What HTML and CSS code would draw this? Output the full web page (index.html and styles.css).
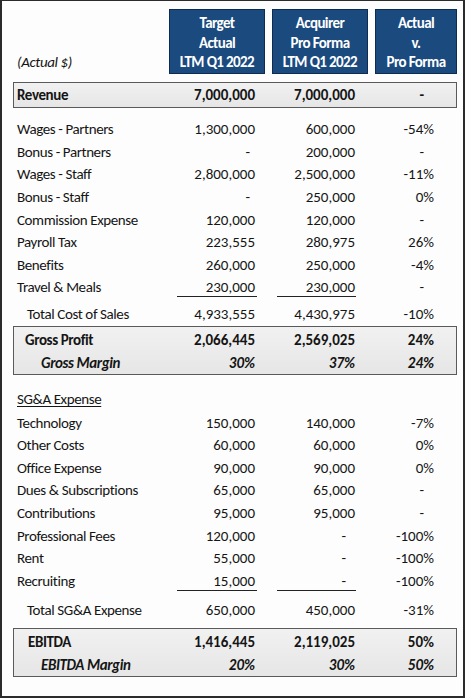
FILE: index.html
```html
<!DOCTYPE html>
<html>
<head>
<meta charset="utf-8">
<link rel="stylesheet" href="styles.css">
</head>
<body>
<div class="frame">
  <div class="row head">
    <div class="lbl unit">(Actual $)</div>
    <div class="hbox">Target<br>Actual<br>LTM Q1 2022</div>
    <div class="hbox">Acquirer<br>Pro Forma<br>LTM Q1 2022</div>
    <div class="hbox">Actual<br>v.<br>Pro Forma</div>
  </div>

  <div class="box single">
    <div class="row b"><div class="lbl">Revenue</div><div class="n c1">7,000,000</div><div class="n c2">7,000,000</div><div class="n c3 dash">-</div></div>
  </div>

  <div class="section first">
    <div class="row"><div class="lbl">Wages - Partners</div><div class="n c1">1,300,000</div><div class="n c2">600,000</div><div class="n c3">-54%</div></div>
    <div class="row"><div class="lbl">Bonus - Partners</div><div class="n c1 dash">-</div><div class="n c2">200,000</div><div class="n c3 dash">-</div></div>
    <div class="row"><div class="lbl">Wages - Staff</div><div class="n c1">2,800,000</div><div class="n c2">2,500,000</div><div class="n c3">-11%</div></div>
    <div class="row"><div class="lbl">Bonus - Staff</div><div class="n c1 dash">-</div><div class="n c2">250,000</div><div class="n c3">0%</div></div>
    <div class="row"><div class="lbl">Commission Expense</div><div class="n c1">120,000</div><div class="n c2">120,000</div><div class="n c3 dash">-</div></div>
    <div class="row"><div class="lbl">Payroll Tax</div><div class="n c1">223,555</div><div class="n c2">280,975</div><div class="n c3">26%</div></div>
    <div class="row"><div class="lbl">Benefits</div><div class="n c1">260,000</div><div class="n c2">250,000</div><div class="n c3">-4%</div></div>
    <div class="row"><div class="lbl">Travel &amp; Meals</div><div class="n c1 ul">230,000</div><div class="n c2 ul">230,000</div><div class="n c3 dash">-</div></div>
    <div class="row total"><div class="lbl ind">Total Cost of Sales</div><div class="n c1">4,933,555</div><div class="n c2">4,430,975</div><div class="n c3">-10%</div></div>
  </div>

  <div class="box double">
    <div class="row b"><div class="lbl ind2">Gross Profit</div><div class="n c1">2,066,445</div><div class="n c2">2,569,025</div><div class="n c3">24%</div></div>
    <div class="row b i"><div class="lbl ind3">Gross Margin</div><div class="n c1">30%</div><div class="n c2">37%</div><div class="n c3">24%</div></div>
  </div>

  <div class="section second">
    <div class="row"><div class="lbl"><span class="u">SG&amp;A Expense</span></div></div>
    <div class="row gapped"><div class="lbl">Technology</div><div class="n c1">150,000</div><div class="n c2">140,000</div><div class="n c3">-7%</div></div>
    <div class="row"><div class="lbl">Other Costs</div><div class="n c1">60,000</div><div class="n c2">60,000</div><div class="n c3">0%</div></div>
    <div class="row"><div class="lbl">Office Expense</div><div class="n c1">90,000</div><div class="n c2">90,000</div><div class="n c3">0%</div></div>
    <div class="row"><div class="lbl">Dues &amp; Subscriptions</div><div class="n c1">65,000</div><div class="n c2">65,000</div><div class="n c3 dash">-</div></div>
    <div class="row"><div class="lbl">Contributions</div><div class="n c1">95,000</div><div class="n c2">95,000</div><div class="n c3 dash">-</div></div>
    <div class="row"><div class="lbl">Professional Fees</div><div class="n c1">120,000</div><div class="n c2 dash">-</div><div class="n c3">-100%</div></div>
    <div class="row"><div class="lbl">Rent</div><div class="n c1">55,000</div><div class="n c2 dash">-</div><div class="n c3">-100%</div></div>
    <div class="row"><div class="lbl">Recruiting</div><div class="n c1 ul">15,000</div><div class="n c2 ul dash">-</div><div class="n c3">-100%</div></div>
    <div class="row total total2"><div class="lbl ind">Total SG&amp;A Expense</div><div class="n c1">650,000</div><div class="n c2">450,000</div><div class="n c3">-31%</div></div>
  </div>

  <div class="box double last">
    <div class="row b"><div class="lbl ind4">EBITDA</div><div class="n c1">1,416,445</div><div class="n c2">2,119,025</div><div class="n c3">50%</div></div>
    <div class="row b i"><div class="lbl ind3">EBITDA Margin</div><div class="n c1">20%</div><div class="n c2">30%</div><div class="n c3">50%</div></div>
  </div>
</div>
</body>
</html>
```

FILE: styles.css
```css
html, body {
  margin: 0;
  padding: 0;
  background: #ffffff;
}
.frame {
  width: 465px;
  height: 698px;
  box-sizing: border-box;
  border: 2px solid #2b2b2b;
  border-top-width: 1px;
  padding: 8px 8px 0 9px;
  font-family: "Carlito", "Calibri", "Roboto", sans-serif;
  font-size: 15px;
  letter-spacing: -0.4px;
  color: #151515;
  background: #fdfdfd;
}
.row {
  display: grid;
  grid-template-columns: 149px 96px 96px 82px;
  column-gap: 7px;
  height: 22.6px;
  align-items: center;
  padding-left: 2px;
}
.head {
  height: 65px;
  align-items: end;
}
.unit {
  font-style: italic;
  padding-bottom: 3px;
}
.hbox {
  height: 65px;
  box-sizing: border-box;
  background: #1b4a7e;
  border: 1px solid #0e2c52;
  color: #ffffff;
  font-weight: 700;
  text-align: center;
  line-height: 19.5px;
  padding-top: 4px;
  font-size: 15px;
  letter-spacing: -0.6px;
}
.lbl {
  padding-left: 4px;
  white-space: nowrap;
}
.n {
  text-align: right;
  white-space: nowrap;
  line-height: 20px;
  letter-spacing: 0;
}
.c1 { padding-right: 10px; }
.c2 { padding-right: 13px; }
.c3 { padding-right: 23px; }
.c1.dash { padding-right: 15px; }
.c2.dash { padding-right: 22px; }
.c3.dash { padding-right: 33px; }
.ul {
  border-bottom: 1px solid #222;
  align-self: start;
  height: 21px;
  padding-top: 1px;
  box-sizing: border-box;
  margin-left: 8px;
}
.c2.ul { margin-left: 5px; margin-right: 12px; padding-right: 1px; }
.c2.ul.dash { padding-right: 10px; }
.c1.ul { margin-right: 8px; padding-right: 2px; }
.box {
  border: 1.5px solid #5a5a5a;
  background: linear-gradient(#f1f1f1, #e6e6e6);
  margin-left: 2px;
  width: 444px;
  box-sizing: border-box;
}
.box .row { padding-left: 0; margin-left: -1px; }
.single {
  margin-top: 8px;
  height: 26px;
  padding-top: 1px;
}
.double {
  height: 49px;
  padding-top: 2px;
}
.first { margin-top: 10px; }
.total { height: 23px; margin-top: 4px; }
.total2 { margin-top: 6px; }
.second { margin-top: 13px; }
.gapped { margin-top: 1px; }
.b { font-weight: 700; }
.i { font-style: italic; }
.u { text-decoration: underline; text-underline-offset: 2px; }
.ind { padding-left: 14px; }
.ind2 { padding-left: 12px; }
.ind3 { padding-left: 28px; }
.ind4 { padding-left: 15px; }
.last { margin-top: 7px; }
```
